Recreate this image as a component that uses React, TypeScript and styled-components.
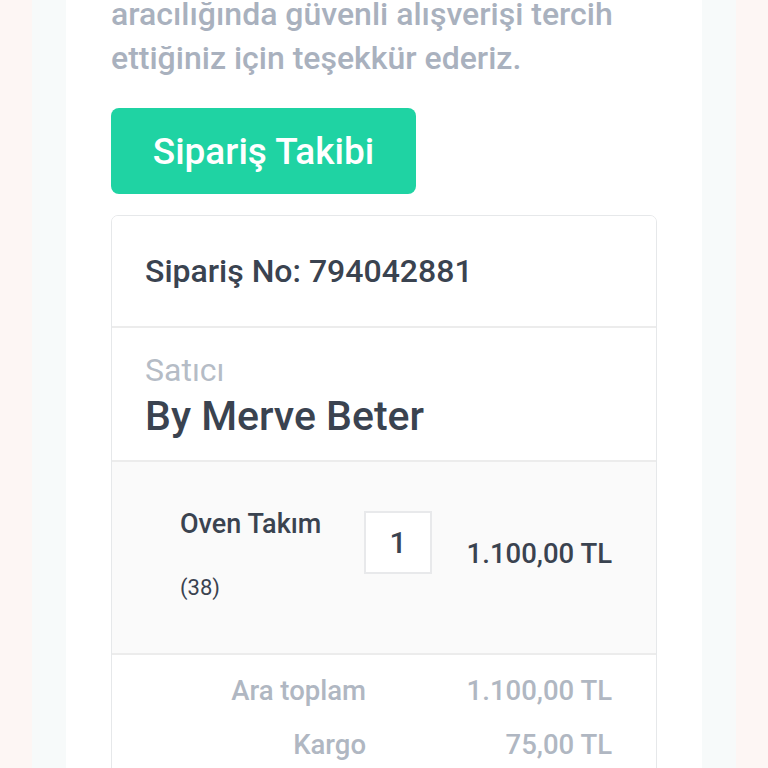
import React from 'react';
import styled, { createGlobalStyle } from 'styled-components';

const GlobalStyle = createGlobalStyle`
  html, body {
    margin: 0;
    padding: 0;
    background: #fdf6f4;
    overflow: hidden;
  }
  body {
    font-family: Roboto, 'Noto Sans', 'Liberation Sans', sans-serif;
    -webkit-font-smoothing: antialiased;
  }
`;

const Page = styled.div`
  min-height: 768px;
  padding: 0 32px;
  display: flex;
`;

const Backdrop = styled.div`
  flex: 1;
  background: #f7fafa;
  padding: 0 34px;
  display: flex;
`;

const Sheet = styled.main`
  flex: 1;
  background: #ffffff;
  padding: 0 45px;
  overflow: hidden;
`;

const Intro = styled.p`
  margin: -8px 0 0 0;
  font-size: 32px;
  line-height: 44px;
  font-weight: 500;
  color: #a9b1be;
  white-space: nowrap;
`;

const TrackButton = styled.button`
  display: block;
  margin-top: 28px;
  width: 305px;
  height: 86px;
  border: none;
  border-radius: 8px;
  background: #1fd3a3;
  color: #ffffff;
  font-family: inherit;
  font-size: 37px;
  font-weight: 500;
  cursor: pointer;
`;

const OrderCard = styled.section`
  margin-top: 21px;
  border: 1px solid #e6e8ea;
  border-radius: 7px;
  overflow: hidden;
`;

const CardRow = styled.div<{ $shaded?: boolean }>`
  background: ${(p) => (p.$shaded ? '#fafafa' : '#ffffff')};
  & + & {
    border-top: 2px solid #ececec;
  }
`;

const OrderNo = styled.div`
  height: 110px;
  display: flex;
  align-items: center;
  padding: 0 33px;
  font-size: 32px;
  font-weight: 500;
  color: #3a4350;
`;

const SellerBlock = styled.div`
  height: 132px;
  padding: 22px 33px 0;
  box-sizing: border-box;
`;

const SellerLabel = styled.div`
  font-size: 32px;
  line-height: 40px;
  color: #b5bcc6;
`;

const SellerName = styled.div`
  font-size: 41px;
  line-height: 52px;
  font-weight: 500;
  color: #3a4350;
`;

const ItemGrid = styled.div`
  height: 191px;
  box-sizing: border-box;
  padding: 47px 44px 0 68px;
  display: grid;
  grid-template-columns: 1fr 68px 180px;
  align-items: start;
`;

const ItemInfo = styled.div`
  display: flex;
  flex-direction: column;
`;

const ItemName = styled.div`
  font-size: 27px;
  line-height: 30px;
  font-weight: 500;
  color: #3a4350;
`;

const ItemCode = styled.div`
  margin-top: 37px;
  font-size: 22px;
  line-height: 24px;
  color: #3a4350;
`;

const QtyBox = styled.div`
  width: 68px;
  height: 63px;
  box-sizing: border-box;
  border: 2px solid #e8e9eb;
  background: #ffffff;
  display: flex;
  align-items: center;
  justify-content: center;
  font-size: 30px;
  font-weight: 500;
  color: #3a4350;
  margin-top: 2px;
`;

const ItemPrice = styled.div`
  margin-top: 30px;
  text-align: right;
  font-size: 27.5px;
  line-height: 30px;
  font-weight: 500;
  color: #3a4350;
`;

const Totals = styled.div`
  padding: 21px 44px 0 0;
  display: grid;
  grid-template-columns: 254px 1fr;
  row-gap: 24px;
  height: 140px;
  align-content: start;
`;

const TotalCell = styled.div`
  text-align: right;
  font-size: 27.5px;
  line-height: 30px;
  font-weight: 500;
  color: #b0b7c2;
`;

const totals = [
  { label: 'Ara toplam', value: '1.100,00 TL' },
  { label: 'Kargo', value: '75,00 TL' },
];

const App = () => (
  <>
    <GlobalStyle />
    <Page>
      <Backdrop>
        <Sheet>
          <Intro>
            aracılığında güvenli alışverişi tercih
            <br />
            ettiğiniz için teşekkür ederiz.
          </Intro>
          <TrackButton type="button">Sipariş Takibi</TrackButton>
          <OrderCard>
            <CardRow>
              <OrderNo>Sipariş No: 794042881</OrderNo>
            </CardRow>
            <CardRow>
              <SellerBlock>
                <SellerLabel>Satıcı</SellerLabel>
                <SellerName>By Merve Beter</SellerName>
              </SellerBlock>
            </CardRow>
            <CardRow $shaded>
              <ItemGrid>
                <ItemInfo>
                  <ItemName>Oven Takım</ItemName>
                  <ItemCode>(38)</ItemCode>
                </ItemInfo>
                <QtyBox>1</QtyBox>
                <ItemPrice>1.100,00 TL</ItemPrice>
              </ItemGrid>
            </CardRow>
            <CardRow>
              <Totals>
                {totals.map((t) => (
                  <React.Fragment key={t.label}>
                    <TotalCell>{t.label}</TotalCell>
                    <TotalCell>{t.value}</TotalCell>
                  </React.Fragment>
                ))}
              </Totals>
            </CardRow>
          </OrderCard>
        </Sheet>
      </Backdrop>
    </Page>
  </>
);

export default App;
